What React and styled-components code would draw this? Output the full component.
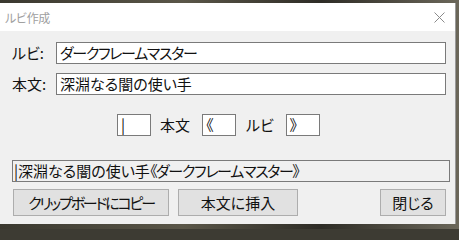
import styled, { createGlobalStyle } from 'styled-components';

const GlobalStyle = createGlobalStyle`
  html, body {
    margin: 0;
    padding: 0;
    width: 459px;
    height: 229px;
    overflow: hidden;
    background: #3d3b33;
  }
  body {
    font-family: "Noto Sans CJK JP", "Noto Sans", sans-serif;
    font-feature-settings: "palt";
  }
`;

const Desktop = styled.div`
  width: 459px;
  height: 229px;
  padding-top: 3px;
  box-sizing: border-box;
  overflow: hidden;
  background: linear-gradient(90deg, #3a382f 0%, #5a5648 40%, #2e2c26 70%, #6b675a 100%);
`;

const Window = styled.div`
  width: 456px;
  height: 221px;
  display: flex;
  flex-direction: column;
  background: #f0f0f0;
  border-right: 1px solid #9a9a9a;
  box-sizing: border-box;
  overflow: hidden;
`;

const TitleBar = styled.div`
  height: 28px;
  flex: none;
  background: #fff;
  display: flex;
  align-items: center;
  justify-content: space-between;
  padding: 0 10px 0 5px;
`;

const TitleText = styled.span`
  font-size: 12px;
  color: #a0a0a0;
  letter-spacing: -0.3px;
`;

const CloseIcon = styled.svg`
  width: 11px;
  height: 11px;
  display: block;
`;

const Client = styled.div`
  flex: 1;
  display: flex;
  flex-direction: column;
  padding: 11px 9px 0 12px;
`;

const FieldRow = styled.div`
  display: flex;
  align-items: center;
  margin-bottom: 9px;
`;

const Label = styled.span`
  font-size: 15px;
  color: #111;
  width: 44px;
  flex: none;
  line-height: 22px;
`;

const Kana = styled.span`
  letter-spacing: ${p => p.$squeeze || -1.3}px;
`;

const TextBox = styled.div`
  box-sizing: border-box;
  height: 22px;
  width: ${p => (p.$width ? `${p.$width}px` : 'auto')};
  flex: ${p => (p.$width ? 'none' : '1')};
  background: #fff;
  border: 1px solid #7a7a7a;
  padding: 0 3px;
  font-size: 15px;
  line-height: 20px;
  color: #111;
  white-space: nowrap;
  overflow: hidden;
`;

const MarkRow = styled.div`
  display: flex;
  align-items: center;
  padding-left: 105px;
  margin-top: 10px;
`;

const MarkLabel = styled.span`
  font-size: 15px;
  color: #111;
  margin: 0 ${p => p.$right}px 0 ${p => p.$left}px;
  line-height: 22px;
`;

const ResultBox = styled.div`
  box-sizing: border-box;
  flex: none;
  height: 22px;
  margin: 24px -4px 0 0;
  background: #f0f0f0;
  border: 1px solid #7a7a7a;
  padding: 0 1px;
  font-size: 15px;
  line-height: 20px;
  color: #111;
  white-space: nowrap;
  overflow: hidden;
`;

const ButtonRow = styled.div`
  display: flex;
  align-items: center;
  margin-top: 7px;
  padding-left: 1px;
  margin-right: -3px;
`;

const Button = styled.button`
  box-sizing: border-box;
  height: 27px;
  width: ${p => p.$width}px;
  margin-left: ${p => p.$left || 0}px;
  background: #e1e1e1;
  border: 1px solid #adadad;
  border-radius: 0;
  padding: 0;
  font-family: inherit;
  font-size: 15px;
  font-feature-settings: "palt";
  color: #111;
  line-height: 25px;
  white-space: nowrap;
`;

export default function App() {
  return (
    <>
      <GlobalStyle />
      <Desktop>
        <Window>
          <TitleBar>
            <TitleText>ルビ作成</TitleText>
            <CloseIcon viewBox="0 0 11 11">
              <path d="M0.5 0.5 L10.5 10.5 M10.5 0.5 L0.5 10.5" stroke="#8a8a8a" strokeWidth="1" fill="none" />
            </CloseIcon>
          </TitleBar>
          <Client>
            <FieldRow>
              <Label>ルビ:</Label>
              <TextBox><Kana>ダークフレームマスター</Kana></TextBox>
            </FieldRow>
            <FieldRow>
              <Label>本文:</Label>
              <TextBox>深淵なる闇の使い手</TextBox>
            </FieldRow>
            <MarkRow>
              <TextBox $width={34}>|</TextBox>
              <MarkLabel $left={9} $right={12}>本文</MarkLabel>
              <TextBox $width={34}>《</TextBox>
              <MarkLabel $left={10} $right={12}>ルビ</MarkLabel>
              <TextBox $width={34}>》</TextBox>
            </MarkRow>
            <ResultBox>
              |深淵なる闇の使い手<Kana>《ダークフレームマスター》</Kana>
            </ResultBox>
            <ButtonRow>
              <Button $width={156}><Kana $squeeze={-2.2}>クリップボードにコピー</Kana></Button>
              <Button $width={120} $left={9}>本文に挿入</Button>
              <Button $width={66} $left={82}>閉じる</Button>
            </ButtonRow>
          </Client>
        </Window>
      </Desktop>
    </>
  );
}
